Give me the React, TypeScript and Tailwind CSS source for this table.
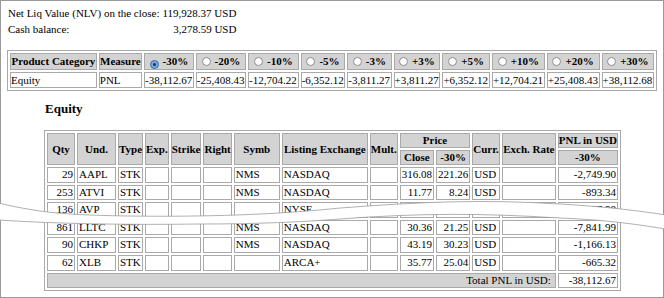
import React from "react";

const pcts = ["-30%", "-20%", "-10%", "-5%", "-3%", "+3%", "+5%", "+10%", "+20%", "+30%"];
const pnls = ["-38,112.67", "-25,408.43", "-12,704.22", "-6,352.12", "-3,811.27", "+3,811.27", "+6,352.12", "+12,704.21", "+25,408.43", "+38,112.68"];
// content widths (cells are content-box inside tables)
const topW = [41, 49, 49, 50, 42, 42, 46, 47, 52, 52, 51];

interface Pos {
  qty: number;
  und: string;
  symb: string;
  exch: string;
  close: string;
  shock: string;
  pnl: string;
}

const rows: Pos[] = [
  { qty: 29, und: "AAPL", symb: "NMS", exch: "NASDAQ", close: "316.08", shock: "221.26", pnl: "-2,749.90" },
  { qty: 253, und: "ATVI", symb: "NMS", exch: "NASDAQ", close: "11.77", shock: "8.24", pnl: "-893.34" },
  { qty: 136, und: "AVP", symb: "", exch: "NYSE", close: "28.87", shock: "20.21", pnl: "-1,177.98" },
  { qty: 861, und: "LLTC", symb: "NMS", exch: "NASDAQ", close: "30.36", shock: "21.25", pnl: "-7,841.99" },
  { qty: 90, und: "CHKP", symb: "NMS", exch: "NASDAQ", close: "43.19", shock: "30.23", pnl: "-1,166.13" },
  { qty: 62, und: "XLB", symb: "", exch: "ARCA+", close: "35.77", shock: "25.04", pnl: "-665.32" },
];

const topTh = "border border-[#a9a9a9] bg-[#d3d3d3] font-bold px-0 py-0 leading-[15px] text-center whitespace-nowrap";
const topTd = "border border-[#a9a9a9] bg-white px-0 py-0 leading-[14px] whitespace-nowrap";
const th = "border border-[#a9a9a9] bg-[#d3d3d3] font-bold px-0 py-0 leading-[13px] text-center whitespace-nowrap";
const td = "border border-[#a9a9a9] bg-white px-[1px] py-0 leading-[13.6px] whitespace-nowrap";

const upper = "M-2,203 C20,208 40,212 70,214 C120,217 200,217 260,214 C300,212 320,210 340,208 C420,202 480,199 560,204 C610,207 640,211 666,215";
const lower = "M666,229 C640,225 610,220 560,218 C480,213 420,213 340,219 C300,222 260,224 200,224 C130,225 60,224 -2,220";

function Radio({ on }: { on?: boolean }) {
  if (on) {
    return (
      <span className="inline-flex items-center justify-center w-[9px] h-[9px] rounded-full border border-[#3d6ea8] bg-[#74a8e4] align-[-1px] mr-[4px]">
        <span className="block w-[3px] h-[3px] rounded-full bg-[#1d3350]" />
      </span>
    );
  }
  return <span className="inline-block w-[9px] h-[9px] rounded-full border border-[#8c8c8c] bg-white align-[-1px] mr-[4px]" />;
}

export default function App() {
  return (
    <div className="relative w-[664px] h-[298px] border border-[#9a9a9a] bg-white text-black text-[11px] font-['Liberation_Serif',serif]">
      {/* summary */}
      <div className="pl-[7px] pt-[4px] grid grid-cols-[auto_auto] w-fit gap-x-[3px] leading-[16px]">
        <span>Net Liq Value (NLV) on the close:</span>
        <span className="text-right">119,928.37 USD</span>
        <span>Cash balance:</span>
        <span className="text-right">3,278.59 USD</span>
      </div>

      {/* scenario table */}
      <table className="w-[650px] mt-[13px] ml-[6px] border-separate border-spacing-[2px] border border-[#a9a9a9]">
        <thead>
          <tr>
            <th className={`${topTh} w-[85px]`}>Product Category</th>
            {["Measure", ...pcts].map((p, i) => (
              <th key={p} className={topTh} style={{ width: topW[i] }}>
                {i > 0 && <Radio on={i === 1} />}
                {p}
              </th>
            ))}
          </tr>
        </thead>
        <tbody>
          <tr>
            <td className={topTd}>Equity</td>
            <td className={topTd}>PNL</td>
            {pnls.map((v) => (
              <td key={v} className={topTd}>{v}</td>
            ))}
          </tr>
        </tbody>
      </table>

      <h3 className="ml-[44px] mt-[9px] text-[13px] font-bold leading-[18px]">Equity</h3>

      {/* positions */}
      <table className="mt-[12px] ml-[43px] border-separate border-spacing-[2px] border border-[#a9a9a9]">
        <thead>
          <tr>
            <th rowSpan={2} className={`${th} w-[28px]`}>Qty</th>
            <th rowSpan={2} className={`${th} w-[39px]`}>Und.</th>
            <th rowSpan={2} className={`${th} w-[24px]`}>Type</th>
            <th rowSpan={2} className={`${th} w-[23px]`}>Exp.</th>
            <th rowSpan={2} className={`${th} w-[30px]`}>Strike</th>
            <th rowSpan={2} className={`${th} w-[27px]`}>Right</th>
            <th rowSpan={2} className={`${th} w-[46px]`}>Symb</th>
            <th rowSpan={2} className={`${th} w-[86px]`}>Listing Exchange</th>
            <th rowSpan={2} className={`${th} w-[26px]`}>Mult.</th>
            <th colSpan={2} className={th}>Price</th>
            <th rowSpan={2} className={`${th} w-[27px]`}>Curr.</th>
            <th rowSpan={2} className={`${th} w-[54px]`}>Exch. Rate</th>
            <th className={`${th} w-[59px]`}>PNL in USD</th>
          </tr>
          <tr>
            <th className={`${th} w-[31px]`}>Close</th>
            <th className={`${th} w-[32px]`}>-30%</th>
            <th className={th}>-30%</th>
          </tr>
        </thead>
        <tbody>
          {rows.map((r) => (
            <tr key={r.und}>
              <td className={`${td} text-right`}>{r.qty}</td>
              <td className={td}>{r.und}</td>
              <td className={td}>STK</td>
              <td className={td}></td>
              <td className={td}></td>
              <td className={td}></td>
              <td className={td}>{r.symb}</td>
              <td className={td}>{r.exch}</td>
              <td className={td}></td>
              <td className={`${td} text-right`}>{r.close}</td>
              <td className={`${td} text-right`}>{r.shock}</td>
              <td className={td}>USD</td>
              <td className={td}></td>
              <td className={`${td} text-right`}>{r.pnl}</td>
            </tr>
          ))}
          <tr>
            <td colSpan={13} className="border border-[#a9a9a9] bg-[#d3d3d3] px-[4px] py-0 leading-[13.6px] text-right">
              Total PNL in USD:
            </td>
            <td className={`${td} text-right`}>-38,112.67</td>
          </tr>
        </tbody>
      </table>

      {/* torn-page cut across the screenshot */}
      <svg
        className="absolute left-[-1px] top-[-1px] w-[664px] h-[298px] pointer-events-none"
        viewBox="0 0 664 298"
      >
        <path d={`${upper} L666,229 C640,225 610,220 560,218 C480,213 420,213 340,219 C300,222 260,224 200,224 C130,225 60,224 -2,220 Z`} fill="#ffffff" />
        <path d={upper} fill="none" stroke="#9c9c9c" strokeWidth="0.8" />
        <path d={lower} fill="none" stroke="#9c9c9c" strokeWidth="0.8" />
      </svg>
    </div>
  );
}
